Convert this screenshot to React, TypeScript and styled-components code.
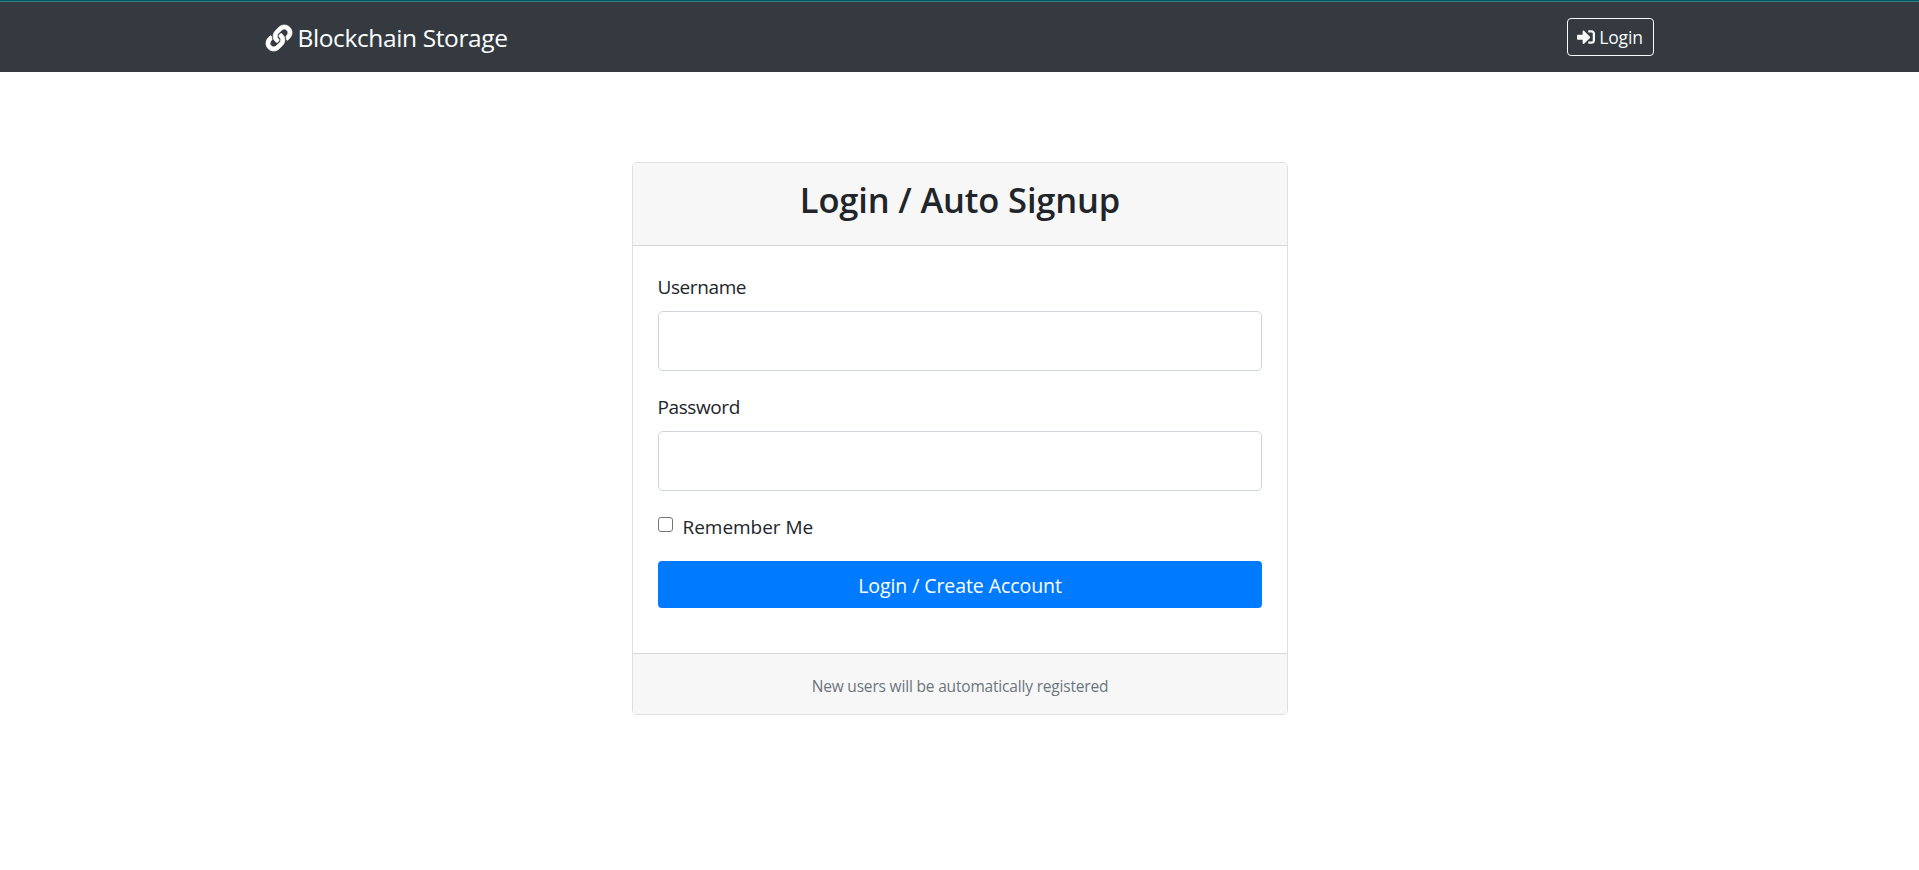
import React from "react";
import styled, { createGlobalStyle } from "styled-components";
import { FaLink, FaSignInAlt } from "react-icons/fa";

const GlobalStyle = createGlobalStyle`
  *, *::before, *::after { box-sizing: border-box; }
  body {
    margin: 0;
    background: #fff;
    color: #212529;
    font-family: "Segoe UI", "Open Sans", "Noto Sans", sans-serif;
    font-size: 19px;
    line-height: 30px;
  }
`;

const Navbar = styled.nav`
  height: 72px;
  background: #343a40;
  border-top: 1px solid #005861;
  box-shadow: inset 0 1px 0 #3a7f85;
`;

const NavContainer = styled.div`
  width: 1388px;
  height: 100%;
  margin: 0 auto;
  padding-top: 3px;
  display: flex;
  align-items: center;
  justify-content: space-between;
`;

const Brand = styled.a`
  display: flex;
  align-items: center;
  gap: 6px;
  color: #fff;
  font-size: 24.5px;
  letter-spacing: -0.38px;
  white-space: nowrap;
  svg {
    width: 26px;
    height: 26px;
    overflow: visible;
    stroke: currentColor;
    stroke-width: 14px;
  }
`;

const LoginButton = styled.button`
  width: 87px;
  height: 38px;
  margin-bottom: 2px;
  display: flex;
  align-items: center;
  justify-content: center;
  gap: 4px;
  padding: 0;
  color: #f8f9fa;
  background: transparent;
  border: 1px solid #f8f9fa;
  border-radius: 4px;
  font: inherit;
  font-size: 17.5px;
  letter-spacing: -0.15px;
  svg { width: 18px; height: 18px; }
`;

const Main = styled.main`
  display: flex;
  justify-content: center;
  padding-top: 90px;
`;

const Card = styled.section`
  width: 656px;
  height: 553px;
  display: flex;
  flex-direction: column;
  border: 1px solid #dfdfdf;
  border-radius: 5px;
  background: #fff;
  overflow: hidden;
`;

const CardHeader = styled.header`
  height: 83px;
  padding: 16px 0 0 1px;
  background: #f7f7f7;
  border-bottom: 1px solid #d8d8d8;
  text-align: center;
`;

const Title = styled.h3`
  margin: 0;
  font-size: 34.5px;
  font-weight: 600;
  line-height: 42px;
  letter-spacing: -0.15px;
`;

const Form = styled.form`
  flex: 1;
  padding: 26px 25px 0;
`;

const Field = styled.div`
  margin-bottom: 20px;
`;

const Label = styled.label`
  display: block;
  margin-bottom: 9px;
  letter-spacing: -0.4px;

  ${Field} + ${Field} > & {
    padding-top: 1px;
  }
`;

const Input = styled.input`
  display: block;
  width: 100%;
  height: 60px;
  padding: 8px 15px;
  border: 1px solid #ced4da;
  border-radius: 5px;
  font: inherit;
`;

const CheckRow = styled.label`
  display: flex;
  align-items: flex-start;
  gap: 10px;
  height: 50px;
  padding-top: 1px;
  letter-spacing: -0.03px;
`;

const Checkbox = styled.input`
  width: 15px;
  height: 15px;
  margin: 5px 0 0;
  appearance: none;
  border: 1px solid #767676;
  border-radius: 3px;
  background: #fff;
`;

const Submit = styled.button`
  display: block;
  width: 100%;
  height: 47px;
  padding: 3px 0 0 1px;
  border: 0;
  border-radius: 4px;
  background: #007bff;
  color: #fff;
  font: inherit;
  font-size: 19.5px;
  letter-spacing: -0.07px;
`;

const CardFooter = styled.footer`
  height: 61px;
  padding: 17px 0 0 1px;
  border-top: 1px solid #d8d8d8;
  background: #f7f7f7;
  color: #6c757d;
  text-align: center;
  font-size: 15.5px;
  letter-spacing: -0.18px;
`;

export default function App() {
  return (
    <>
      <GlobalStyle />
      <Navbar>
        <NavContainer>
          <Brand><FaLink /><span>Blockchain Storage</span></Brand>
          <LoginButton type="button"><FaSignInAlt /><span>Login</span></LoginButton>
        </NavContainer>
      </Navbar>
      <Main>
        <Card>
          <CardHeader><Title>Login / Auto Signup</Title></CardHeader>
          <Form>
            <Field>
              <Label htmlFor="username">Username</Label>
              <Input id="username" type="text" />
            </Field>
            <Field>
              <Label htmlFor="password">Password</Label>
              <Input id="password" type="password" />
            </Field>
            <CheckRow><Checkbox type="checkbox" /><span>Remember Me</span></CheckRow>
            <Submit type="button">Login / Create Account</Submit>
          </Form>
          <CardFooter>New users will be automatically registered</CardFooter>
        </Card>
      </Main>
    </>
  );
}
